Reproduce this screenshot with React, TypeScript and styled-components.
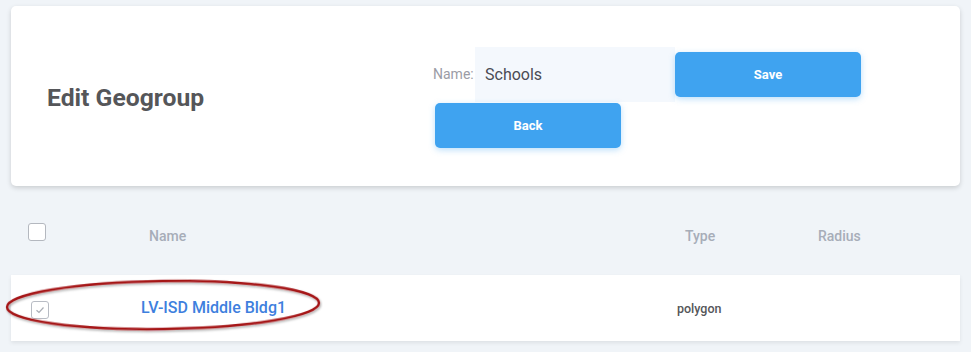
import React from "react";
import styled, { createGlobalStyle } from "styled-components";

const Global = createGlobalStyle`
  html, body { margin: 0; padding: 0; background: #f0f4f8; }
  body { font-family: Roboto, "Noto Sans", "Liberation Sans", sans-serif; }
  * { box-sizing: border-box; }
`;

const Page = styled.div`
  position: relative;
  width: 971px;
  height: 352px;
  padding: 6px 11px 0 11px;
  overflow: hidden;
`;

const Card = styled.div`
  height: 180px;
  background: #fff;
  border-radius: 5px;
  box-shadow: 0 2px 5px rgba(0, 0, 0, 0.16);
  display: flex;
  align-items: center;
  padding: 0 0 0 36px;
`;

const Title = styled.h2`
  margin: 0;
  flex: 0 0 386px;
  font-size: 24.7px;
  font-weight: 700;
  color: #555659;
  padding-top: 2px;
`;

const Form = styled.div`
  display: flex;
  flex-direction: column;
  margin-top: 2px;
`;

const FormRow = styled.div`
  display: flex;
  align-items: center;
`;

const Label = styled.label`
  width: 42px;
  font-size: 14px;
  color: #9b9ca6;
`;

const Input = styled.div`
  width: 200px;
  height: 55px;
  background: #f4f8fd;
  display: flex;
  align-items: center;
  padding-left: 10px;
  font-size: 16px;
  color: #4a4b55;
`;

const Button = styled.button<{ $offset?: number }>`
  width: 186px;
  height: 45px;
  border: none;
  border-radius: 5px;
  background: #3fa3f0;
  color: #fff;
  font-family: Roboto, "Liberation Sans", sans-serif;
  font-size: 13px;
  font-weight: 700;
  box-shadow: 0 2px 6px rgba(63, 163, 240, 0.35);
  margin-left: ${(p) => p.$offset ?? 0}px;
  cursor: pointer;
`;

const HeaderRow = styled.div`
  display: grid;
  grid-template-columns: 121px 536px 133px 1fr;
  align-items: center;
  height: 89px;
  padding-left: 17px;
`;

const HeadCell = styled.div`
  font-size: 14px;
  font-weight: 500;
  color: #a7adb8;
  padding-top: 10px;
`;

const DataRow = styled.div`
  display: grid;
  grid-template-columns: 110px 536px 133px 1fr;
  align-items: center;
  height: 66px;
  background: #fff;
  padding-left: 20px;
  box-shadow: 0 2px 4px rgba(0, 0, 0, 0.08);
`;

const Box = styled.span<{ $checked?: boolean }>`
  width: 18px;
  height: 18px;
  border: 1px solid ${(p) => (p.$checked ? "#b8bcc4" : "#b4b8bf")};
  border-radius: 3px;
  background: #fff;
  display: flex;
  align-items: center;
  justify-content: center;
  margin-top: ${(p) => (p.$checked ? "4px" : "3px")};
`;

const LinkCell = styled.a`
  font-size: 16px;
  font-weight: 500;
  color: #3e7fde;
  text-decoration: none;
  margin-top: -1px;
`;

const TypeCell = styled.div`
  font-size: 12.5px;
  font-weight: 500;
  color: #555659;
`;

const Annotation = styled.svg`
  position: absolute;
  left: 0;
  top: 270px;
  pointer-events: none;
`;

export default function App() {
  return (
    <>
      <Global />
      <Page>
        <Card>
          <Title>Edit Geogroup</Title>
          <Form>
            <FormRow>
              <Label>Name:</Label>
              <Input>Schools</Input>
              <Button>Save</Button>
            </FormRow>
            <FormRow>
              <Button $offset={2} style={{ marginTop: 1 }}>Back</Button>
            </FormRow>
          </Form>
        </Card>
        <HeaderRow>
          <Box />
          <HeadCell>Name</HeadCell>
          <HeadCell>Type</HeadCell>
          <HeadCell>Radius</HeadCell>
        </HeaderRow>
        <DataRow>
          <Box $checked>
            <svg width="10" height="8" viewBox="0 0 10 8">
              <path d="M1.5 4.2 L4 6.5 L8.5 1.5" fill="none" stroke="#a9adb5" strokeWidth="1.2" />
            </svg>
          </Box>
          <LinkCell href="#">LV-ISD Middle Bldg1</LinkCell>
          <TypeCell>polygon</TypeCell>
          <div />
        </DataRow>
        <Annotation width="340" height="80" viewBox="0 0 340 80">
          <defs>
            <filter id="sh" x="-10%" y="-30%" width="120%" height="160%">
              <feDropShadow dx="1" dy="1.5" stdDeviation="1" floodColor="#000" floodOpacity="0.35" />
            </filter>
          </defs>
          <ellipse
            cx="163"
            cy="35"
            rx="156"
            ry="24"
            fill="none"
            stroke="#a51419"
            strokeWidth="2.4"
            transform="rotate(-0.8 163 35)"
            filter="url(#sh)"
          />
        </Annotation>
      </Page>
    </>
  );
}
